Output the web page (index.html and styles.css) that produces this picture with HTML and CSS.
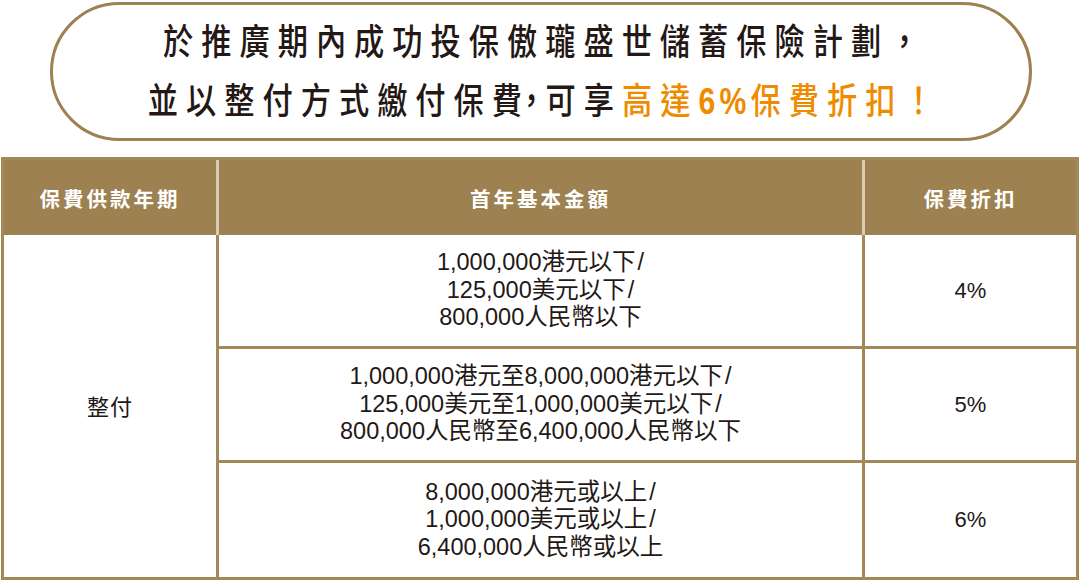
FILE: index.html
```html
<!DOCTYPE html>
<html lang="zh-Hant">
<head>
<meta charset="utf-8">
<title>保費折扣</title>
<link rel="stylesheet" href="styles.css">
</head>
<body>
<div class="page">
  <div class="banner">
    <p class="banner-line">於推廣期內成功投保傲瓏盛世儲蓄保險計劃，</p>
    <p class="banner-line">並以整付方式繳付保<span class="last-ch">費</span><span class="comma">，</span>可享<span class="hl">高達<span class="num">6%</span>保費折扣！</span></p>
  </div>
  <table class="discount">
    <thead>
      <tr class="head-row">
        <th class="c1">保費供款年期</th>
        <th class="c2">首年基本金額</th>
        <th class="c3">保費折扣</th>
      </tr>
    </thead>
    <tbody>
      <tr class="body-row">
        <td class="c1 term" rowspan="3">整付</td>
        <td class="c2">1,000,000港元以下<span class="sl">/</span><br>125,000美元以下<span class="sl">/</span><br>800,000人民幣以下</td>
        <td class="c3 last">4%</td>
      </tr>
      <tr class="body-row">
        <td class="c2">1,000,000港元至8,000,000港元以下<span class="sl">/</span><br>125,000美元至1,000,000美元以下<span class="sl">/</span><br>800,000人民幣至6,400,000人民幣以下</td>
        <td class="c3 last">5%</td>
      </tr>
      <tr class="body-row">
        <td class="c2 bottom">8,000,000港元或以上<span class="sl">/</span><br>1,000,000美元或以上<span class="sl">/</span><br>6,400,000人民幣或以上</td>
        <td class="c3 last bottom">6%</td>
      </tr>
    </tbody>
  </table>
</div>
</body>
</html>
```

FILE: styles.css
```css
html, body {
  margin: 0;
  padding: 0;
  background: #ffffff;
}

.page {
  width: 1080px;
  height: 583px;
  overflow: hidden;
  padding-top: 2px;
  box-sizing: border-box;
}

.banner {
  box-sizing: border-box;
  width: 982px;
  height: 139px;
  margin-left: 50px;
  border: 3px solid #9e8150;
  border-radius: 70px;
  display: flex;
  flex-direction: column;
  align-items: center;
  justify-content: center;
  padding-bottom: 2px;
}

.banner-line {
  margin: 0;
  font-family: "Noto Sans CJK TC", "Noto Sans CJK SC", sans-serif;
  font-weight: 500;
  font-size: 36px;
  line-height: 59px;
  letter-spacing: 9.5px;
  color: #231815;
  white-space: nowrap;
  padding-left: 10px;
  transform: scaleX(0.84);
}

.last-ch {
  letter-spacing: 2px;
}

.comma {
  font-feature-settings: "halt";
  letter-spacing: 0;
  margin-right: 8px;
}

.hl {
  color: #ef8b00;
}

.num {
  font-family: "Liberation Sans", Arial, sans-serif;
  font-weight: 700;
  font-size: 36px;
  letter-spacing: 5px;
}

.discount {
  margin-top: 16px;
  margin-left: 1px;
  width: 1078px;
  border-collapse: separate;
  border-spacing: 0;
  table-layout: fixed;
  border: 3px solid #a38858;
  font-family: "Liberation Sans", Arial, "Noto Sans CJK TC", sans-serif;
  color: #231815;
}

.discount th,
.discount td {
  box-sizing: border-box;
  padding: 0;
  text-align: center;
  vertical-align: middle;
}

.c1 { width: 215px; }
.c2 { width: 646px; }
.c3 { width: 211px; }

.head-row {
  height: 75px;
}

.discount th {
  background: #9e8150;
  color: #ffffff;
  font-family: "Noto Sans CJK TC", "Noto Sans CJK SC", sans-serif;
  font-weight: 700;
  font-size: 20.5px;
  letter-spacing: 3px;
  border-right: 3px solid #d8ccb4;
  padding-top: 1px;
}

.discount th.c3 {
  border-right: none;
}

.body-row {
  height: 114px;
}

.discount td {
  font-size: 23.5px;
  line-height: 27.5px;
  border-right: 3px solid #a38858;
  border-bottom: 3px solid #a38858;
  padding-top: 2px;
  padding-bottom: 2px;
}

.sl {
  margin-left: 2px;
}

.discount td.term {
  font-family: "Noto Sans CJK TC", "Noto Sans CJK SC", sans-serif;
  border-bottom: none;
  font-size: 22px;
  letter-spacing: 1px;
  padding: 0;
}

.discount td.last {
  border-right: none;
  font-size: 22px;
}

.discount td.bottom {
  border-bottom: none;
}
```
